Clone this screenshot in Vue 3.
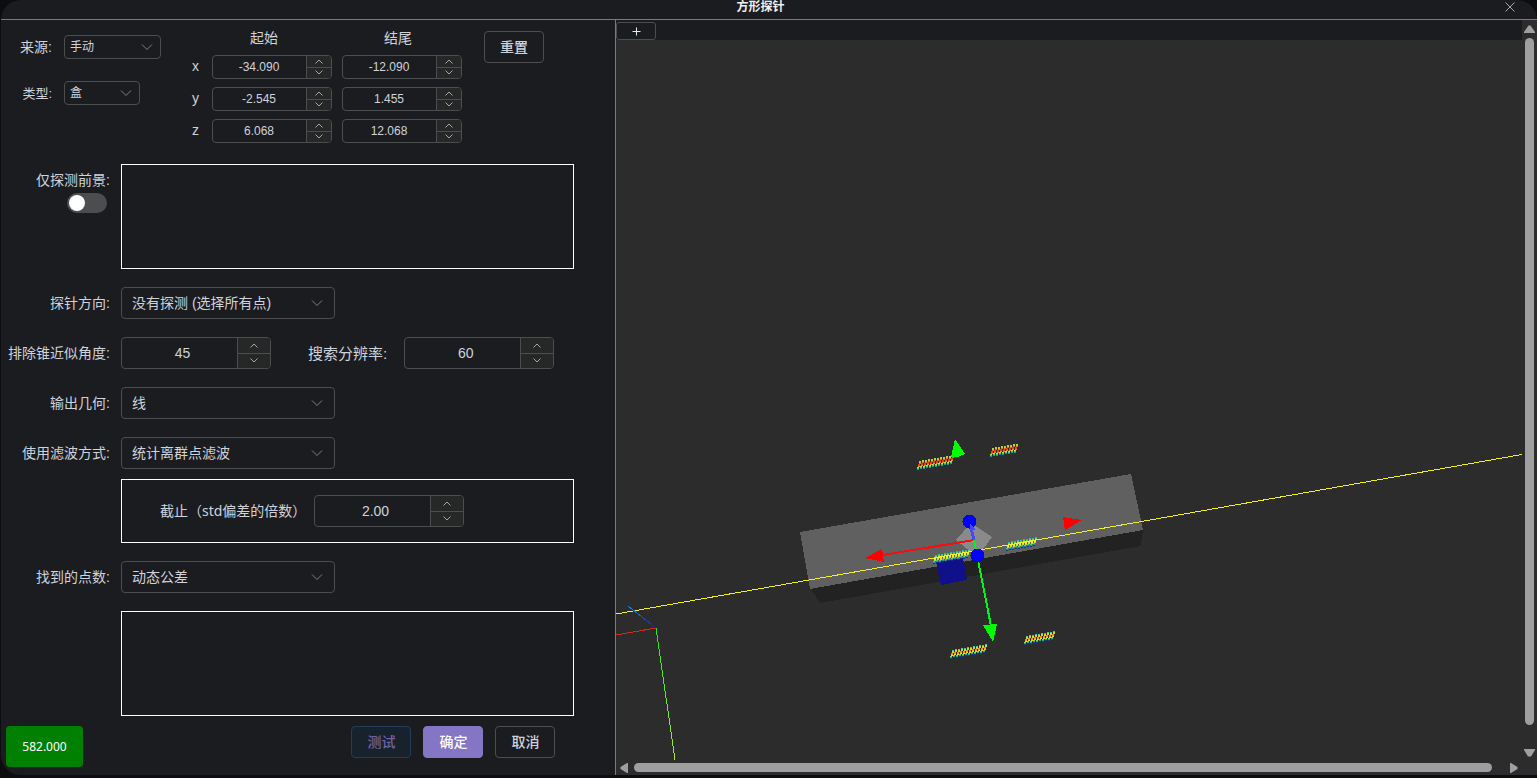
<script setup>
import { ref, reactive } from 'vue'

const source = ref('手动')
const kind = ref('盒')
const foregroundOnly = ref(false)

const axes = reactive([
  { name: 'x', values: ['-34.090', '-12.090'] },
  { name: 'y', values: ['-2.545', '1.455'] },
  { name: 'z', values: ['6.068', '12.068'] },
])

const direction = ref('没有探测 (选择所有点)')
const coneAngle = ref('45')
const resolution = ref('60')
const geometry = ref('线')
const filter = ref('统计离群点滤波')
const cutoff = ref('2.00')
const found = ref('动态公差')

function step(text, delta) {
  const digits = (text.split('.')[1] || '').length
  return (Number(text) + delta).toFixed(digits)
}

const warm = ['#a8d840', '#e8c020', '#e87018', '#e03808', '#e84810', '#e89018', '#c8e030', '#48d070', '#18989a']
const mild = ['#30b8a0', '#70d850', '#d8e828', '#f4f020', '#f0e820', '#a8e838', '#40d080', '#1890a8', '#183090']
const hot = ['#40c8a0', '#c8e028', '#f0c818', '#f08810', '#f0a010', '#e8e020', '#80e040', '#18b098', '#1838a0']

const clouds = [
  { x: 917, y: 461, length: 35, colors: warm },
  { x: 990, y: 448, length: 27, colors: warm },
  { x: 933, y: 555, length: 35, colors: mild },
  { x: 1006, y: 542, length: 29, colors: mild },
  { x: 950, y: 650, length: 35, colors: hot },
  { x: 1024, y: 636, length: 29, colors: hot },
]

const points = clouds.flatMap(({ x, y, length, colors }) => {
  const list = []
  for (let d = 0; d < length; d += 3) {
    const top = y - Math.round(d * 0.17)
    for (let row = 0; row < 9; row++) {
      list.push({
        x: x + d + Math.floor((8 - row) / 3),
        y: top + row,
        color: colors[row],
      })
    }
  }
  return list
})
</script>

<template>
  <div class="page">
    <section class="dialog" aria-label="方形探针">
      <header class="titlebar">
        <h1>方形探针</h1>
        <button class="close" type="button" aria-label="关闭">
          <svg width="10" height="10" viewBox="0 0 10 10"><path d="M0.5 0.5L9.5 9.5M9.5 0.5L0.5 9.5" /></svg>
        </button>
      </header>

      <div class="body">
        <form class="panel" @submit.prevent>
          <div class="top">
            <div class="kinds">
              <div class="kind">
                <label for="source">来源:</label>
                <div class="select small wide">
                  <select id="source" v-model="source"><option>手动</option></select>
                  <svg width="12" height="8" viewBox="0 0 12 8"><path d="M1 1.5L6 6.5L11 1.5" /></svg>
                </div>
              </div>
              <div class="kind">
                <label class="minor" for="kind">类型:</label>
                <div class="select small">
                  <select id="kind" v-model="kind"><option>盒</option></select>
                  <svg width="12" height="8" viewBox="0 0 12 8"><path d="M1 1.5L6 6.5L11 1.5" /></svg>
                </div>
              </div>
            </div>

            <div class="axes">
              <div class="axes-head"><span>起始</span><span>结尾</span></div>
              <template v-for="axis in axes" :key="axis.name">
                <span class="axis-name">{{ axis.name }}</span>
                <div v-for="(value, i) in axis.values" :key="i" class="number small">
                  <input v-model="axis.values[i]" type="text" inputmode="decimal" :aria-label="axis.name + (i ? ' 结尾' : ' 起始')" />
                  <div class="steps">
                    <button type="button" aria-label="增加" @click="axis.values[i] = step(value, 1)">
                      <svg width="8" height="5" viewBox="0 0 8 5"><path d="M0.5 4.5L4 1L7.5 4.5" /></svg>
                    </button>
                    <button type="button" aria-label="减少" @click="axis.values[i] = step(value, -1)">
                      <svg width="8" height="5" viewBox="0 0 8 5"><path d="M0.5 0.5L4 4L7.5 0.5" /></svg>
                    </button>
                  </div>
                </div>
              </template>
            </div>

            <button class="button reset" type="button">重置</button>
          </div>

          <div class="rows">
            <div class="row">
              <div class="toggle">
                <label for="foreground">仅探测前景:</label>
                <input id="foreground" v-model="foregroundOnly" class="switch" type="checkbox" role="switch" />
              </div>
              <div class="frame"></div>
            </div>

            <div class="row">
              <label for="direction">探针方向:</label>
              <div class="select">
                <select id="direction" v-model="direction"><option>没有探测 (选择所有点)</option></select>
                <svg width="12" height="8" viewBox="0 0 12 8"><path d="M1 1.5L6 6.5L11 1.5" /></svg>
              </div>
            </div>

            <div class="row">
              <label for="cone">排除锥近似角度:</label>
              <div class="pair">
                <div class="number">
                  <input id="cone" v-model="coneAngle" type="text" inputmode="decimal" />
                  <div class="steps">
                    <button type="button" aria-label="增加" @click="coneAngle = step(coneAngle, 1)">
                      <svg width="8" height="5" viewBox="0 0 8 5"><path d="M0.5 4.5L4 1L7.5 4.5" /></svg>
                    </button>
                    <button type="button" aria-label="减少" @click="coneAngle = step(coneAngle, -1)">
                      <svg width="8" height="5" viewBox="0 0 8 5"><path d="M0.5 0.5L4 4L7.5 0.5" /></svg>
                    </button>
                  </div>
                </div>
                <label class="second" for="resolution">搜索分辨率:</label>
                <div class="number">
                  <input id="resolution" v-model="resolution" type="text" inputmode="decimal" />
                  <div class="steps">
                    <button type="button" aria-label="增加" @click="resolution = step(resolution, 1)">
                      <svg width="8" height="5" viewBox="0 0 8 5"><path d="M0.5 4.5L4 1L7.5 4.5" /></svg>
                    </button>
                    <button type="button" aria-label="减少" @click="resolution = step(resolution, -1)">
                      <svg width="8" height="5" viewBox="0 0 8 5"><path d="M0.5 0.5L4 4L7.5 0.5" /></svg>
                    </button>
                  </div>
                </div>
              </div>
            </div>

            <div class="row">
              <label for="geometry">输出几何:</label>
              <div class="select">
                <select id="geometry" v-model="geometry"><option>线</option></select>
                <svg width="12" height="8" viewBox="0 0 12 8"><path d="M1 1.5L6 6.5L11 1.5" /></svg>
              </div>
            </div>

            <div class="row">
              <label for="filter">使用滤波方式:</label>
              <div class="stack">
                <div class="select">
                  <select id="filter" v-model="filter"><option>统计离群点滤波</option></select>
                  <svg width="12" height="8" viewBox="0 0 12 8"><path d="M1 1.5L6 6.5L11 1.5" /></svg>
                </div>
                <div class="frame cutoff">
                  <label for="cutoff">截止（std偏差的倍数）</label>
                  <div class="number">
                    <input id="cutoff" v-model="cutoff" type="text" inputmode="decimal" />
                    <div class="steps">
                      <button type="button" aria-label="增加" @click="cutoff = step(cutoff, 1)">
                        <svg width="8" height="5" viewBox="0 0 8 5"><path d="M0.5 4.5L4 1L7.5 4.5" /></svg>
                      </button>
                      <button type="button" aria-label="减少" @click="cutoff = step(cutoff, -1)">
                        <svg width="8" height="5" viewBox="0 0 8 5"><path d="M0.5 0.5L4 4L7.5 0.5" /></svg>
                      </button>
                    </div>
                  </div>
                </div>
              </div>
            </div>

            <div class="row">
              <label for="found">找到的点数:</label>
              <div class="select">
                <select id="found" v-model="found"><option>动态公差</option></select>
                <svg width="12" height="8" viewBox="0 0 12 8"><path d="M1 1.5L6 6.5L11 1.5" /></svg>
              </div>
            </div>

            <div class="row">
              <span></span>
              <div class="frame"></div>
            </div>
          </div>

          <footer class="actions">
            <output class="result">582.000</output>
            <div class="buttons">
              <button class="button test" type="button">测试</button>
              <button class="button confirm" type="submit">确定</button>
              <button class="button" type="button">取消</button>
            </div>
          </footer>
        </form>

        <div class="viewer">
          <div class="tabs">
            <button class="add" type="button" aria-label="新增视图">
              <svg width="9" height="9" viewBox="0 0 9 9"><path d="M4.5 0.5V8.5M0.5 4.5H8.5" /></svg>
            </button>
          </div>

          <svg class="scene" viewBox="616 40 906 720" preserveAspectRatio="xMinYMin slice">
            <defs>
              <linearGradient id="axis-green" gradientUnits="userSpaceOnUse" x1="656" y1="628" x2="675" y2="760">
                <stop offset="0" stop-color="#28e028" />
                <stop offset="1" stop-color="#a0f020" />
              </linearGradient>
              <linearGradient id="axis-blue" gradientUnits="userSpaceOnUse" x1="656" y1="628" x2="628" y2="606">
                <stop offset="0" stop-color="#1c1cb0" />
                <stop offset="1" stop-color="#2088d8" />
              </linearGradient>
            </defs>
            <g shape-rendering="crispEdges">
              <polygon points="810,588 1143,530 1141,546 820,603" fill="#222222" />
              <polygon points="800,532 1131,474 1143,530 810,589" fill="#606060" />
              <polygon points="936,562 963,558 967,580 941,585" fill="#10108a" />
              <polygon points="956,540 971,523 992,537 984,548 972,553" fill="#8a8a8a" />
              <rect v-for="(p, i) in points" :key="i" :x="p.x" :y="p.y" width="2" height="1" :fill="p.color" />
              <line x1="616" y1="614" x2="1522" y2="454.5" stroke="#f4f01c" />
              <line x1="880" y1="555.5" x2="974" y2="540" stroke="#f01010" stroke-width="2" />
              <polygon points="865,558 882,549 884,562" fill="#ff0000" />
              <polygon points="1063,517 1082,520 1065,530" fill="#ff0000" />
              <polygon points="955,439 965,454 958,457 951,457" fill="#00ff00" />
              <line x1="974" y1="540" x2="991" y2="626" stroke="#00f818" stroke-width="2" />
              <polygon points="983,625 997,624 993,642" fill="#00ff00" />
              <line x1="970" y1="524" x2="974" y2="540" stroke="#4646ff" stroke-width="3" />
              <circle cx="969.5" cy="521.5" r="7" fill="#0000ff" />
              <polygon points="970,524 975,528 975,530 970,530" fill="#4646ff" />
              <circle cx="977.5" cy="555.5" r="7" fill="#0000ff" />
              <line x1="616" y1="635" x2="656" y2="628" stroke="#d82818" />
              <line x1="628" y1="606" x2="656" y2="628" stroke="url(#axis-blue)" />
              <line x1="656" y1="628" x2="675" y2="760" stroke="url(#axis-green)" />
            </g>
          </svg>

          <div class="bar vertical">
            <svg width="11" height="8" viewBox="0 0 11 8"><path d="M4.5 0.5H6.5L11 7V8H0V7Z" /></svg>
            <div class="thumb"></div>
            <svg class="end" width="11" height="8" viewBox="0 0 11 8"><path d="M0 0H11V1L7 7.5H4L0 1Z" /></svg>
          </div>
          <div class="bar horizontal">
            <svg width="8" height="10" viewBox="0 0 8 10"><path d="M8 0V10H7L0.500 6V4L7 0Z" /></svg>
            <div class="thumb"></div>
            <svg class="end" width="8" height="10" viewBox="0 0 8 10"><path d="M0 0V10H1L7.500 6V4L1 0Z" /></svg>
          </div>
        </div>
      </div>
    </section>
  </div>
</template>

<style>
body {
  margin: 0;
  background: #0d0d0f;
}
</style>

<style scoped>
.page {
  box-sizing: border-box;
  display: flex;
  min-height: 100vh;
  padding: 0 0 3px 1px;
  font-family: "Liberation Sans", "Noto Sans CJK SC", sans-serif;
  font-size: 14px;
  color: #cfd3dc;
}
.page * {
  box-sizing: border-box;
}
.dialog {
  flex: 1;
  display: flex;
  flex-direction: column;
  min-width: 0;
  overflow: hidden;
  border-radius: 20px 20px 0 20px;
  background: #1b1c20;
}
.titlebar {
  display: flex;
  align-items: center;
  height: 20px;
  padding-right: 17px;
  padding-bottom: 5px;
  border-bottom: 1px solid #7b7b7d;
}
h1 {
  flex: 1;
  margin: 0;
  padding-left: 20px;
  font-size: 12px;
  line-height: 14px;
  font-weight: 700;
  text-align: center;
  color: #f0f0f2;
}
button,
input,
select {
  margin: 0;
  font: inherit;
  color: inherit;
}
button {
  padding: 0;
  cursor: pointer;
}
svg {
  display: block;
  fill: none;
}
.close {
  display: flex;
  justify-content: center;
  width: 20px;
  border: 0;
  background: none;
}
.close svg {
  stroke: #a3a6ad;
}
.body {
  flex: 1;
  display: flex;
  min-height: 0;
}
.panel {
  flex: 0 0 40%;
  display: flex;
  flex-direction: column;
}

.top {
  display: flex;
  align-items: flex-start;
  height: 144px;
  padding: 9px 0 0 19px;
}
.kinds {
  display: flex;
  flex-direction: column;
  gap: 22px;
  padding-top: 6px;
  margin-right: 31px;
}
.kind {
  display: flex;
  align-items: center;
  gap: 12px;
}
.kind label {
  width: 32px;
  padding-bottom: 2px;
  text-align: right;
  white-space: nowrap;
}
.kind .minor {
  font-size: 13px;
}
.axes {
  display: grid;
  grid-template-columns: 10px 120px 120px;
  grid-template-rows: 18px;
  gap: 8px 10px;
}
.axes-head {
  grid-column: 2 / 4;
  display: flex;
  gap: 106px;
  padding-left: 38px;
  line-height: 18px;
}
.axis-name {
  align-self: center;
  padding-bottom: 2px;
}
.reset {
  margin: 2px 0 0 22px;
}

.select {
  display: grid;
  align-items: center;
  width: 214px;
  height: 32px;
}
.select select,
.select svg {
  grid-area: 1 / 1;
}
.select select {
  width: 100%;
  height: 100%;
  padding: 0 28px 0 10px;
  border: 1px solid #4c4d4f;
  border-radius: 4px;
  background: transparent;
  appearance: none;
}
.select option {
  background: #1b1c20;
}
.select svg {
  justify-self: end;
  margin-right: 12px;
  stroke: #7d8087;
  pointer-events: none;
}
.select.small {
  width: 76px;
  height: 24px;
  font-size: 12px;
}
.select.wide {
  width: 97px;
}
.select.small select {
  padding: 0 20px 0 5px;
}
.select.small svg {
  margin-right: 8px;
}

.number {
  display: flex;
  width: 150px;
  height: 32px;
  overflow: hidden;
  border: 1px solid #4c4d4f;
  border-radius: 4px;
}
.number input {
  flex: 1;
  min-width: 0;
  padding: 0 0 0 6px;
  border: 0;
  outline: 0;
  background: transparent;
  text-align: center;
}
.steps {
  display: flex;
  flex-direction: column;
  width: 33px;
  border-left: 1px solid #4c4d4f;
}
.steps button {
  flex: 1;
  display: flex;
  align-items: center;
  justify-content: center;
  border: 0;
  background: #262727;
}
.steps button + button {
  border-top: 1px solid #4c4d4f;
}
.steps svg {
  stroke: #a3a6ad;
}
.number.small {
  width: 120px;
  height: 24px;
  font-size: 12px;
}
.number.small input {
  padding: 0 1px 0 0;
}
.small .steps {
  width: 25px;
}

.rows {
  display: flex;
  flex-direction: column;
  gap: 18px;
}
.row {
  display: grid;
  grid-template-columns: 109px 1fr;
  column-gap: 11px;
  padding-right: 41px;
}
.row > label {
  line-height: 32px;
  text-align: right;
  white-space: nowrap;
}
.toggle {
  display: flex;
  flex-direction: column;
  align-items: flex-end;
  gap: 2px;
  padding-top: 5px;
  line-height: 22px;
}
.switch {
  width: 40px;
  height: 20px;
  margin-right: 3px;
  border-radius: 10px;
  background: #4c4d4f;
  appearance: none;
}
.switch::before {
  content: "";
  display: block;
  width: 16px;
  height: 16px;
  margin: 2px;
  border-radius: 50%;
  background: #ffffff;
}
.switch:checked {
  background: #8475c5;
}
.switch:checked::before {
  margin-left: 22px;
}
.frame {
  min-height: 105px;
  border: 1px solid #ffffff;
}
.pair {
  display: flex;
  align-items: center;
}
.second {
  margin: 0 17px 0 37px;
  padding-bottom: 2px;
  font-size: 15px;
  white-space: nowrap;
}
.stack {
  display: flex;
  flex-direction: column;
  gap: 10px;
}
.cutoff {
  display: flex;
  align-items: center;
  min-height: 64px;
  padding-left: 38px;
}
.cutoff label {
  width: 154px;
  padding-bottom: 2px;
  white-space: nowrap;
  font-family: "Noto Sans", "Noto Sans CJK SC", sans-serif;
}

.actions {
  display: flex;
  align-items: flex-start;
  justify-content: space-between;
  padding: 10px 60px 8px 5px;
}
.result {
  width: 77px;
  border-radius: 4px;
  background: #008000;
  color: #ffffff;
  font-family: "Noto Sans", sans-serif;
  font-size: 12px;
  line-height: 41px;
  text-align: center;
}
.buttons {
  display: flex;
  gap: 12px;
}
.button {
  width: 60px;
  height: 32px;
  padding-bottom: 2px;
  border: 1px solid #4c4d4f;
  border-radius: 4px;
  background: transparent;
  font-weight: 500;
}
.test {
  border-color: #213d5b;
  background: #18222c;
  color: #6e63a8;
}
.confirm {
  border-color: #8475c5;
  background: #8475c5;
  color: #ffffff;
}

.viewer {
  flex: 1;
  display: grid;
  grid-template-columns: 1fr 15px;
  grid-template-rows: 20px 1fr 15px;
  min-width: 0;
  border-left: 1px solid #7b7b7d;
  background: #2c2c2c;
}
.tabs {
  display: flex;
  padding-top: 2px;
  background: #1b1c20;
}
.add {
  display: flex;
  align-items: center;
  justify-content: center;
  width: 40px;
  height: 18px;
  border: 1px solid #4c4d4f;
  border-radius: 3px;
  background: transparent;
}
.add svg {
  stroke: #e5eaf3;
}
.scene {
  grid-area: 2 / 1;
  width: 100%;
  height: 100%;
  min-height: 0;
}
.bar {
  display: flex;
  align-items: center;
}
.bar svg {
  flex: none;
  fill: #9f9f9f;
}
.thumb {
  flex: 1;
  border-radius: 5px;
  background: #9f9f9f;
}
.vertical {
  grid-area: 1 / 2 / 3 / 3;
  flex-direction: column;
  gap: 5px;
  padding: 5px 0 3px;
}
.vertical .thumb {
  width: 9px;
}
.vertical .end {
  margin-top: 19px;
}
.horizontal {
  grid-area: 3 / 1;
  gap: 6px;
  padding: 0 4px 0 4px;
}
.horizontal .thumb {
  height: 9px;
}
.horizontal .end {
  margin-left: 12px;
}
</style>
